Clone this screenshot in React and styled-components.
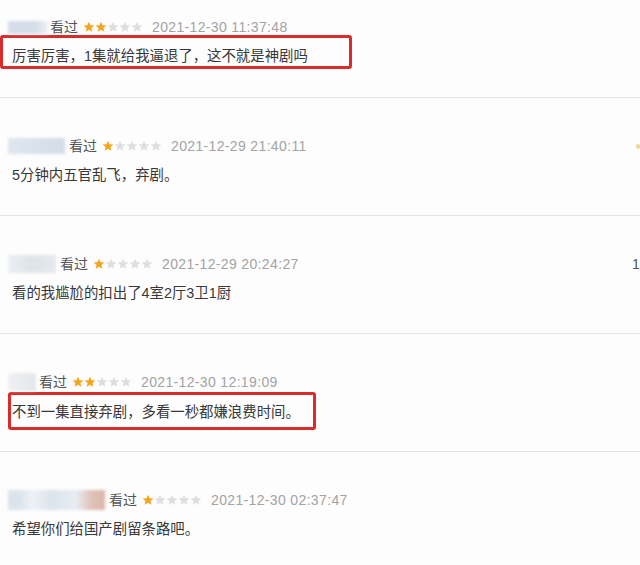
import React from 'react'
import styled, { createGlobalStyle } from 'styled-components'

const GlobalStyle = createGlobalStyle`
    html, body {
        margin: 0;
        padding: 0;
        background: #fdfdfd;
        overflow: hidden;
    }
    body {
        font-family: "Liberation Sans", "Noto Sans CJK SC", sans-serif;
        -webkit-font-smoothing: antialiased;
    }
`

const Page = styled.div`
    width: 660px;
    height: 565px;
    overflow: hidden;
`

const Review = styled.div`
    padding: ${p => p.$top}px 0 0 12px;
    height: ${p => p.$height}px;
    box-sizing: border-box;
    border-bottom: 1px solid #e6e6e6;
`

const Header = styled.div`
    display: flex;
    align-items: center;
    height: 20px;
    margin-left: -4px;
    font-size: 14px;
    line-height: 20px;
`

const Blur = styled.div`
    width: ${p => p.$w}px;
    height: ${p => p.$h}px;
    background: ${p => p.$bg};
    filter: blur(1.5px);
    margin-right: ${p => p.$gap}px;
    flex: none;
`

const Seen = styled.span`
    color: #555;
    margin-right: 5px;
`

const Stars = styled.span`
    display: inline-flex;
    margin-right: 9px;
`

const Date = styled.span`
    color: #a3a3a3;
    letter-spacing: 0.35px;
`

const Extra = styled.span`
    margin-left: auto;
    width: 28px;
    color: #555;
`

const Dot = styled.span`
    margin-left: auto;
    width: 24px;
    &::before {
        content: '';
        display: block;
        width: 4px;
        height: 5px;
        border-radius: 2px;
        background: #ecd9a0;
    }
`

const Comment = styled.div`
    font-size: 14.4px;
    line-height: 22px;
    color: #383838;
    margin-top: 8px;
`

const Highlight = styled.div`
    border: 3px solid #d92b2b;
    border-radius: 3px;
    width: ${p => p.$w}px;
    box-sizing: border-box;
    margin: ${p => p.$mt}px 0 0 ${p => p.$ml}px;
    padding: ${p => p.$pt}px 0 ${p => p.$pb}px ${p => p.$pl}px;
    font-size: 14.4px;
    line-height: 20px;
    color: #383838;
`

const Star = ({ on }) => (
    <svg width="12" height="12" viewBox="0 0 24 24">
        <path
            d="M12 1.5l3.1 7.1 7.6.6-5.8 5 1.8 7.5L12 17.7l-6.7 4 1.8-7.5-5.8-5 7.6-.6z"
            fill={on ? '#f4a51c' : '#dedede'}
        />
    </svg>
)

const Rating = ({ n }) => (
    <Stars>
        {[1, 2, 3, 4, 5].map(i => <Star key={i} on={i <= n} />)}
    </Stars>
)

const ReviewHeader = ({ blur, n, date, right }) => (
    <Header>
        <Blur {...blur} />
        <Seen>看过</Seen>
        <Rating n={n} />
        <Date>{date}</Date>
        {right}
    </Header>
)

export default function App() {
    return (
        <Page>
            <GlobalStyle />
            <Review $top={17} $height={98}>
                <ReviewHeader
                    blur={{ $w: 40, $h: 13, $gap: 2, $bg: 'linear-gradient(90deg,#d5dde8 0 70%,#eef1f5 100%)' }}
                    n={2}
                    date="2021-12-30 11:37:48"
                />
                <Highlight $w={352} $mt={-2} $ml={-12} $pt={8} $pb={0} $pl={9}>
                    厉害厉害，1集就给我逼退了，这不就是神剧吗
                </Highlight>
            </Review>
            <Review $top={38} $height={118}>
                <ReviewHeader
                    blur={{ $w: 57, $h: 16, $gap: 4, $bg: 'linear-gradient(90deg,#dfe6ee,#d3dce7)' }}
                    n={1}
                    date="2021-12-29 21:40:11"
                    right={<Dot />}
                />
                <Comment>5分钟内五官乱飞，弃剧。</Comment>
            </Review>
            <Review $top={38} $height={118}>
                <ReviewHeader
                    blur={{ $w: 48, $h: 18, $gap: 4, $bg: 'linear-gradient(90deg,#eceff3,#dde3ea 50%,#e6eaef)' }}
                    n={1}
                    date="2021-12-29 20:24:27"
                    right={<Extra>12</Extra>}
                />
                <Comment>看的我尴尬的扣出了4室2厅3卫1厨</Comment>
            </Review>
            <Review $top={38} $height={118}>
                <ReviewHeader
                    blur={{ $w: 28, $h: 18, $gap: 3, $bg: 'linear-gradient(90deg,#eef0f3,#e4e7eb)' }}
                    n={2}
                    date="2021-12-30 12:19:09"
                />
                <Highlight $w={308} $mt={0} $ml={-4} $pt={7} $pb={5} $pl={1}>
                    不到一集直接弃剧，多看一秒都嫌浪费时间。
                </Highlight>
            </Review>
            <Review $top={38} $height={140}>
                <ReviewHeader
                    blur={{ $w: 97, $h: 20, $gap: 4, $bg: 'linear-gradient(90deg,#dbe3ec 0 12%,#eef1f5 25%,#dbe3ec 45%,#e8edf2 70%,#e0c4b8 85%,#d8b7a8 100%)' }}
                    n={1}
                    date="2021-12-30 02:37:47"
                />
                <Comment>希望你们给国产剧留条路吧。</Comment>
            </Review>
        </Page>
    )
}
